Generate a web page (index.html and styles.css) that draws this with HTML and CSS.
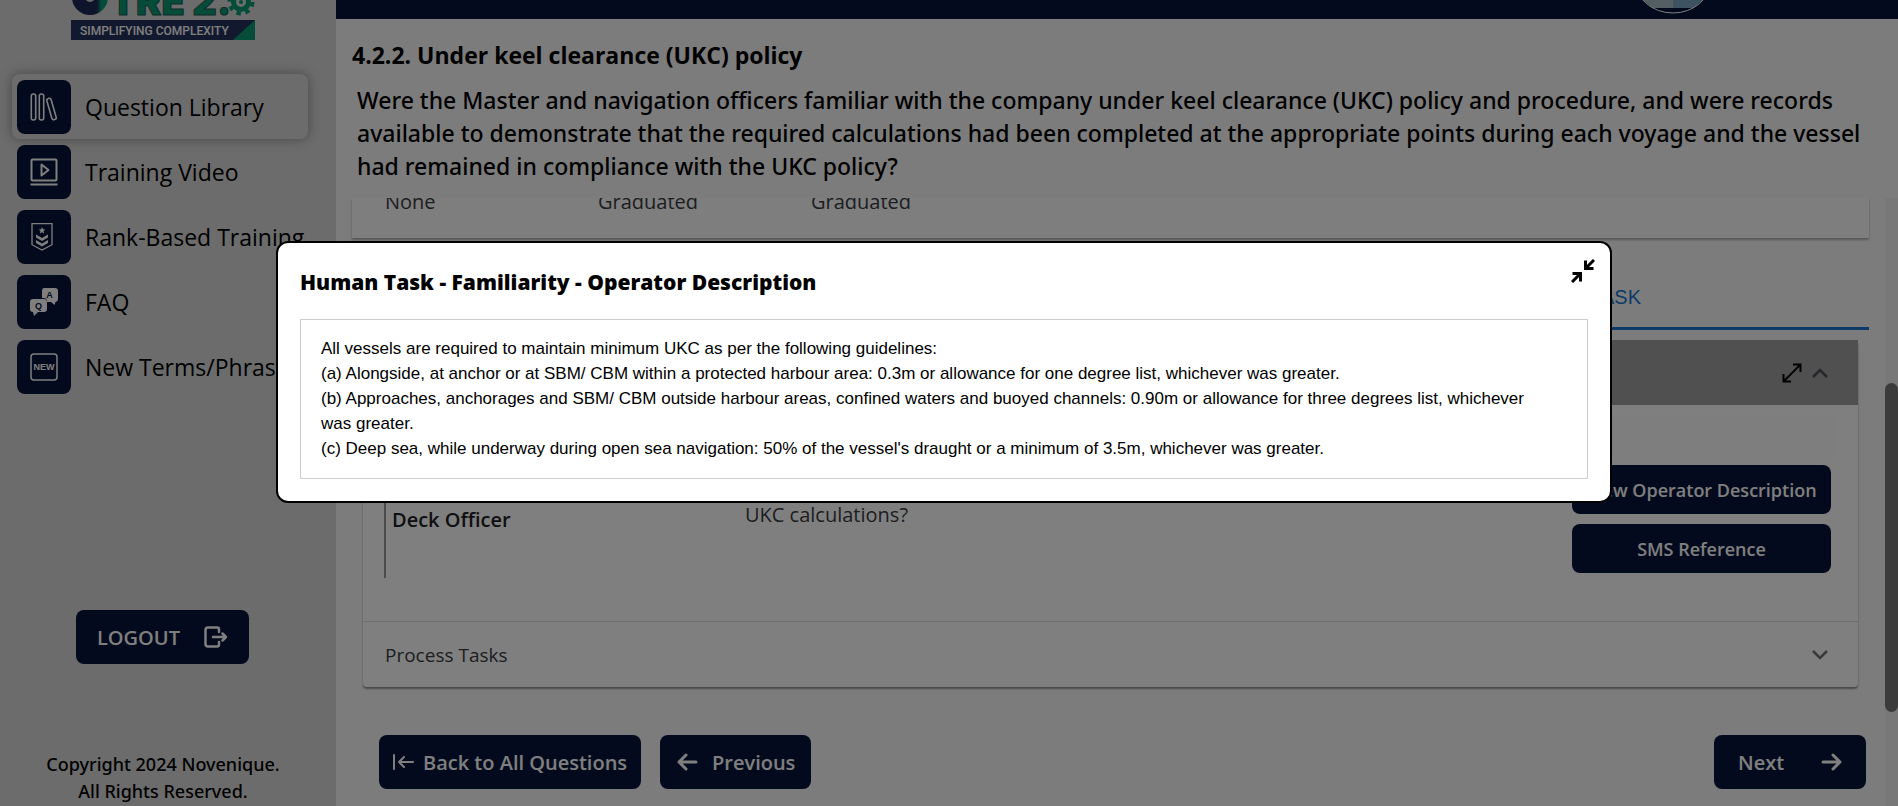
FILE: index.html
```
<!DOCTYPE html>
<html lang="en">

<head>
    <meta charset="UTF-8">
    <title>Question Library</title>
    <link rel="stylesheet" href="styles.css">
</head>

<body>

    <div class="page">
        <aside class="sidebar">
            <svg class="logo" viewBox="0 0 184 41" role="img" aria-label="OTRE 2.0 Simplifying Complexity">
                <defs>
                    <linearGradient id="drop" x1="0" x2="1">
                        <stop offset="0.8" stop-color="#1d2a56" />
                        <stop offset="1" stop-color="#0d9a73" />
                    </linearGradient>
                </defs>
                <circle cx="19" cy="-3" r="11.5" fill="none" stroke="url(#drop)" stroke-width="13" />
                <text class="logo-name" x="39" y="15">TRE 2.</text>
                <circle cx="170" cy="2" r="7.5" fill="none" stroke="#0d9a73" stroke-width="5" />
                <circle cx="170" cy="2" r="11.5" fill="none" stroke="#0d9a73" stroke-width="4" stroke-dasharray="4.500 4.530" />
                <circle cx="170" cy="2" r="2" fill="#0d9a73" />
                <path d="M0 20h184v20H0z" fill="#25315c" />
                <path d="M184 20v20h-22z" fill="#0d9a73" />
                <text class="logo-tag" x="9" y="35">SIMPLIFYING COMPLEXITY</text>
            </svg>

            <nav class="menu">
                <a class="menu-item active" href="#">
                    <span class="menu-icon">
                        <svg width="28" height="28" viewBox="0 0 28 28" fill="none" stroke="#fff" stroke-width="1.6">
                            <rect x="1.3" y="1" width="4.4" height="26" rx="2" />
                            <rect x="9.3" y="1" width="4.4" height="26" rx="2" />
                            <rect x="19.3" y="5" width="4.4" height="22" rx="2" transform="rotate(-16 21.5 16)" />
                        </svg>
                    </span>
                    Question Library
                </a>
                <a class="menu-item" href="#">
                    <span class="menu-icon">
                        <svg width="28" height="28" viewBox="0 0 28 28" fill="none" stroke="#fff" stroke-width="2" stroke-linejoin="round">
                            <rect x="1.5" y="1.5" width="25" height="21" rx="1" />
                            <path d="M11.500 6.500v11l7-5.500zM0.500 26.500h27" />
                        </svg>
                    </span>
                    Training Video
                </a>
                <a class="menu-item" href="#">
                    <span class="menu-icon">
                        <svg width="28" height="28" viewBox="0 0 28 28">
                            <path d="M2 .7h20v21L12 27 2 21.700z" fill="none" stroke="#fff" stroke-width="1.300" />
                            <path d="M12 4l1 2.200 2.300.3-1.700 1.600.5 2.300L12 9.300l-2.100 1.100.5-2.300-1.700-1.600 2.300-.3z" fill="#fff" />
                            <path d="M6 11.500l6 3.500 6-3.500v3L12 18l-6-3.500zM6 17l6 3.500 6-3.500v3l-6 3.500L6 20z" fill="#fff" />
                        </svg>
                    </span>
                    Rank-Based Training
                </a>
                <a class="menu-item" href="#">
                    <span class="menu-icon">
                        <svg width="28" height="28" viewBox="0 0 28 28">
                            <path d="M14 0h11q3 0 3 3v8q0 2.500-2.500 3l-1 3-3.500-3h-4v-1q0-3-4-3h-1V3q0-3 2-3z" fill="#fff" />
                            <path d="M3 11h11q3 0 3 3v7q0 3-3 3H8l-4 4-1-4q-3 0-3-3v-7q0-3 3-3z" fill="#fff" />
                            <text class="icon-letter" x="19.500" y="10" text-anchor="middle">A</text>
                            <text class="icon-letter" x="8.500" y="20.500" text-anchor="middle">Q</text>
                        </svg>
                    </span>
                    FAQ
                </a>
                <a class="menu-item" href="#">
                    <span class="menu-icon">
                        <svg width="28" height="28" viewBox="0 0 28 28">
                            <rect x="1" y="1" width="26" height="26" rx="3" fill="none" stroke="#fff" stroke-width="1.500" />
                            <text class="icon-new" x="14" y="17" text-anchor="middle">NEW</text>
                        </svg>
                    </span>
                    New Terms/Phrases
                </a>
            </nav>

            <button class="btn logout">
                LOGOUT
                <svg width="24" height="22" viewBox="0 0 24 22" fill="none" stroke="#fff" stroke-width="2.500" stroke-linecap="round" stroke-linejoin="round">
                    <path d="M15 6V3.500Q15 1.500 13 1.500H4Q1.500 1.500 1.500 4v14q0 2.500 2.500 2.500h9q2 0 2-2V16M9 11h13M18.500 7.500L22 11l-3.500 3.500" />
                </svg>
            </button>

            <p class="copyright">Copyright 2024 Novenique.<br>All Rights Reserved.</p>
        </aside>

        <main class="main">
            <header class="topbar">
                <svg class="avatar" width="68" height="14" viewBox="0 0 68 14">
                    <path d="M4 0h30v8H14z" fill="#a9bfc6" />
                    <path d="M34 0h30L54 8H34z" fill="#7ba6c4" />
                    <ellipse cx="34" cy="-20" rx="38" ry="33" fill="none" stroke="#fff" />
                </svg>
            </header>

            <div class="question">
                <h1>4.2.2. Under keel clearance (UKC) policy</h1>
                <p>Were the Master and navigation officers familiar with the company under keel clearance (UKC) policy and procedure, and were records available to demonstrate that the required calculations had been completed at the appropriate points during each voyage and the vessel had remained in compliance with the UKC policy?</p>
            </div>

            <div class="scroll-area">
                <div class="content">
                    <div class="rating-card">
                        <span>None</span>
                        <span>Graduated</span>
                        <span>Graduated</span>
                    </div>

                    <div class="tabs">
                        <a class="tab" href="#">HUMAN TASK</a>
                    </div>

                    <section class="accordion">
                        <div class="accordion-head open">
                            <button class="icon-btn" aria-label="Expand">
                                <svg width="20" height="20" viewBox="0 0 20 20" fill="none" stroke="#000" stroke-width="2">
                                    <path d="M1.500 18.500l17-17M11 1.500h7.500V9M1.500 11v7.500H9" />
                                </svg>
                            </button>
                            <button class="icon-btn" aria-label="Collapse">
                                <svg width="16" height="10" viewBox="0 0 16 10" fill="none" stroke="#4c4f55" stroke-width="2.600">
                                    <path d="M1 9l7-7 7 7" />
                                </svg>
                            </button>
                        </div>
                        <div class="task">
                            <div class="task-strip"></div>
                            <div class="task-row">
                                <div class="rank">Deck Officer</div>
                                <p class="task-text">UKC calculations?</p>
                                <div class="task-actions">
                                    <button class="btn small">View Operator Description</button>
                                    <button class="btn small">SMS Reference</button>
                                </div>
                            </div>
                        </div>
                        <div class="accordion-head">
                            <span>Process Tasks</span>
                            <button class="icon-btn" aria-label="Open Process Tasks">
                                <svg width="16" height="10" viewBox="0 0 16 10" fill="none" stroke="#757575" stroke-width="2.600">
                                    <path d="M1 1l7 7 7-7" />
                                </svg>
                            </button>
                        </div>
                    </section>

                    <div class="pager">
                        <button class="btn back">
                            <svg width="21" height="16" viewBox="0 0 21 16" fill="none" stroke="#fff" stroke-width="2" stroke-linecap="round" stroke-linejoin="round">
                                <path d="M1 1v14M20 8H6M11 3L6 8l5 5" />
                            </svg>
                            Back to All Questions
                        </button>
                        <button class="btn previous">
                            <svg width="21" height="18" viewBox="0 0 21 18" fill="none" stroke="#fff" stroke-width="3" stroke-linecap="round" stroke-linejoin="round">
                                <path d="M19 9H2M9 2L2 9l7 7" />
                            </svg>
                            Previous
                        </button>
                        <button class="btn next">
                            Next
                            <svg width="21" height="18" viewBox="0 0 21 18" fill="none" stroke="#fff" stroke-width="3" stroke-linecap="round" stroke-linejoin="round">
                                <path d="M2 9h17M12 2l7 7-7 7" />
                            </svg>
                        </button>
                    </div>
                </div>
                <div class="scrollbar">
                    <div class="thumb"></div>
                </div>
            </div>
        </main>
    </div>

    <div class="overlay">
        <div class="modal" role="dialog" aria-labelledby="modal-title">
            <button class="icon-btn close" aria-label="Close">
                <svg width="24" height="24" viewBox="0 0 24 24" fill="none" stroke="#000" stroke-width="3">
                    <path d="M23 1l-8.500 8.500M14.500 1.500v8h8M1 23l8.500-8.500M1.500 14.500h8v8" />
                </svg>
            </button>
            <h2 id="modal-title">Human Task - Familiarity - Operator Description</h2>
            <div class="description">
                All vessels are required to maintain minimum UKC as per the following guidelines:<br>
                (a) Alongside, at anchor or at SBM/ CBM within a protected harbour area: 0.3m or allowance for one degree list, whichever was greater.<br>
                (b) Approaches, anchorages and SBM/ CBM outside harbour areas, confined waters and buoyed channels: 0.90m or allowance for three degrees list, whichever was greater.<br>
                (c) Deep sea, while underway during open sea navigation: 50% of the vessel's draught or a minimum of 3.5m, whichever was greater.
            </div>
        </div>
    </div>

</body></html>
```

FILE: styles.css
```
* {
    box-sizing: border-box;
}

body {
    margin: 0;
    font-family: "Open Sans", "Noto Sans", sans-serif;
    color: #000;
}

h1,
h2,
p {
    margin: 0;
}

a {
    color: inherit;
    text-decoration: none;
}

.page {
    display: flex;
    height: 100vh;
    overflow: hidden;
}

/* sidebar */

.sidebar {
    display: flex;
    flex-direction: column;
    flex: 0 0 336px;
    background-color: #d8d8d8;
}

.logo {
    width: 184px;
    height: 41px;
    margin-left: 71px;
}

.logo-name {
    font: 900 38px "Inter", sans-serif;
    fill: #0d9a73;
    stroke: #1d5a56;
    stroke-width: 1px;
}

.logo-tag {
    font: 500 12px "Roboto", sans-serif;
    fill: #fff;
}

.menu {
    display: flex;
    flex-direction: column;
    margin-top: 33px;
    padding: 0 12px;
}

.menu-item {
    display: flex;
    align-items: center;
    gap: 14px;
    width: 296px;
    height: 65px;
    padding-left: 5px;
    border-radius: 8px;
    font-size: 23px;
    white-space: nowrap;
}

.menu-item.active {
    box-shadow: 0 0 12px rgba(0, 0, 0, 0.35);
}

.menu-icon {
    display: flex;
    align-items: center;
    justify-content: center;
    flex: 0 0 54px;
    height: 54px;
    border-radius: 8px;
    background-color: #06143a;
}

.icon-letter {
    font: bold 9px "Liberation Sans", sans-serif;
    fill: #06143a;
}

.icon-new {
    font: bold 9px "Liberation Sans", sans-serif;
    fill: #fff;
}

.copyright {
    margin-top: 87px;
    font-family: "Noto Sans", sans-serif;
    font-size: 18px;
    font-weight: 500;
    line-height: 27px;
    text-align: center;
    padding-right: 10px;
}

/* buttons */

.btn {
    display: flex;
    align-items: center;
    height: 54px;
    padding: 0;
    border: 0;
    border-radius: 8px;
    background-color: #06143a;
    color: #fff;
    font-family: inherit;
    font-size: 20px;
    font-weight: 600;
    white-space: nowrap;
}

.btn.logout {
    justify-content: space-between;
    width: 173px;
    margin: 211px 0 0 76px;
    padding: 0 21px;
}

.btn.small {
    justify-content: center;
    height: 49px;
    font-size: 18px;
}

.icon-btn {
    display: flex;
    padding: 0;
    border: 0;
    background: none;
}

/* main column */

.main {
    display: flex;
    flex-direction: column;
    flex: 1;
    min-width: 0;
    background-color: #f9f9f9;
}

.topbar {
    display: flex;
    justify-content: flex-end;
    flex: 0 0 19px;
    padding-right: 191px;
    background-color: #06143a;
}

.question {
    flex: 0 0 179px;
    padding: 20px 28px 0 16px;
}

.question h1 {
    font-size: 23px;
    font-weight: 700;
    line-height: 32px;
}

.question p {
    margin-top: 13px;
    padding-left: 5px;
    font-family: "Noto Sans", sans-serif;
    font-size: 23px;
    font-weight: 500;
    line-height: 33px;
}

.scroll-area {
    display: flex;
    flex: 1;
    min-height: 0;
}

.content {
    display: flex;
    flex-direction: column;
    flex: 1;
    padding: 0 16px;
    overflow: hidden;
}

.scrollbar {
    flex: 0 0 13px;
    background-color: #f1f1f1;
}

.thumb {
    height: 329px;
    margin-top: 185px;
    border-radius: 7px;
    background-color: #777;
}

.rating-card {
    display: grid;
    grid-template-columns: repeat(7, 213px);
    flex: 0 0 40px;
    padding-left: 33px;
    background-color: #fcfcfc;
    box-shadow: 0 2px 2px rgba(0, 0, 0, 0.3);
    color: #3b3d42;
    font-size: 20px;
    line-height: 28px;
}

.rating-card span {
    margin-top: -10px;
}

.tabs {
    display: flex;
    justify-content: flex-end;
    flex: 0 0 92px;
    align-items: flex-end;
    padding: 0 228px 18px 0;
    border-bottom: 3px solid #1976d2;
    color: #1976d2;
    font: 20px/24px "Liberation Sans", Arial, sans-serif;
}

/* accordion */

.accordion {
    margin: 10px 11px 0;
    border-radius: 4px;
    background-color: #fff;
    box-shadow: 0 2px 2px rgba(0, 0, 0, 0.4);
    color: #3b3d42;
    font-size: 19px;
}

.accordion-head {
    display: flex;
    align-items: center;
    justify-content: space-between;
    height: 66px;
    padding: 0 30px 0 22px;
    border-top: 1px solid #ddd;
}

.accordion-head.open {
    justify-content: flex-end;
    gap: 10px;
    height: 65px;
    border-top: 0;
    background-color: #a0a0a0;
}

.task {
    height: 216px;
    padding: 11px 22px 0 21px;
}

.task-strip {
    height: 43px;
    background-color: #fcfcfc;
}

.task-row {
    display: flex;
    align-items: flex-start;
    padding: 6px 5px 0 0;
}

.rank {
    width: 361px;
    height: 113px;
    padding: 41px 0 0 6px;
    border-left: 2px solid #999;
    color: #1e2024;
    font-size: 20px;
    font-weight: 600;
    line-height: 28px;
}

.task-text {
    flex: 1;
    padding-top: 36px;
    line-height: 28px;
    font-size: 20px;
}

.task-actions {
    display: flex;
    flex-direction: column;
    gap: 10px;
    width: 259px;
}

.pager {
    display: flex;
    margin-top: 48px;
    padding: 0 3px 0 27px;
}

.btn.back {
    gap: 9px;
    width: 262px;
    padding-left: 14px;
}

.btn.previous {
    gap: 14px;
    width: 151px;
    margin-left: 19px;
    padding-left: 17px;
}

.btn.next {
    justify-content: space-between;
    width: 152px;
    margin-left: auto;
    padding: 0 24px;
}

/* modal */

.overlay {
    position: fixed;
    inset: 0;
    padding: 241px 286px 0 276px;
    background-color: rgba(0, 0, 0, 0.5);
}

.modal {
    position: relative;
    padding: 22px;
    border: 2px solid #000;
    border-radius: 12px;
    background-color: #fff;
}

.modal h2 {
    font-size: 21px;
    font-weight: 800;
    line-height: 34px;
}

.close {
    position: absolute;
    top: 16px;
    right: 15px;
}

.description {
    margin-top: 20px;
    padding: 16px 40px 17px 20px;
    border: 1px solid #ccc;
    font: 17px/25px "Liberation Sans", Arial, sans-serif;
}
```
